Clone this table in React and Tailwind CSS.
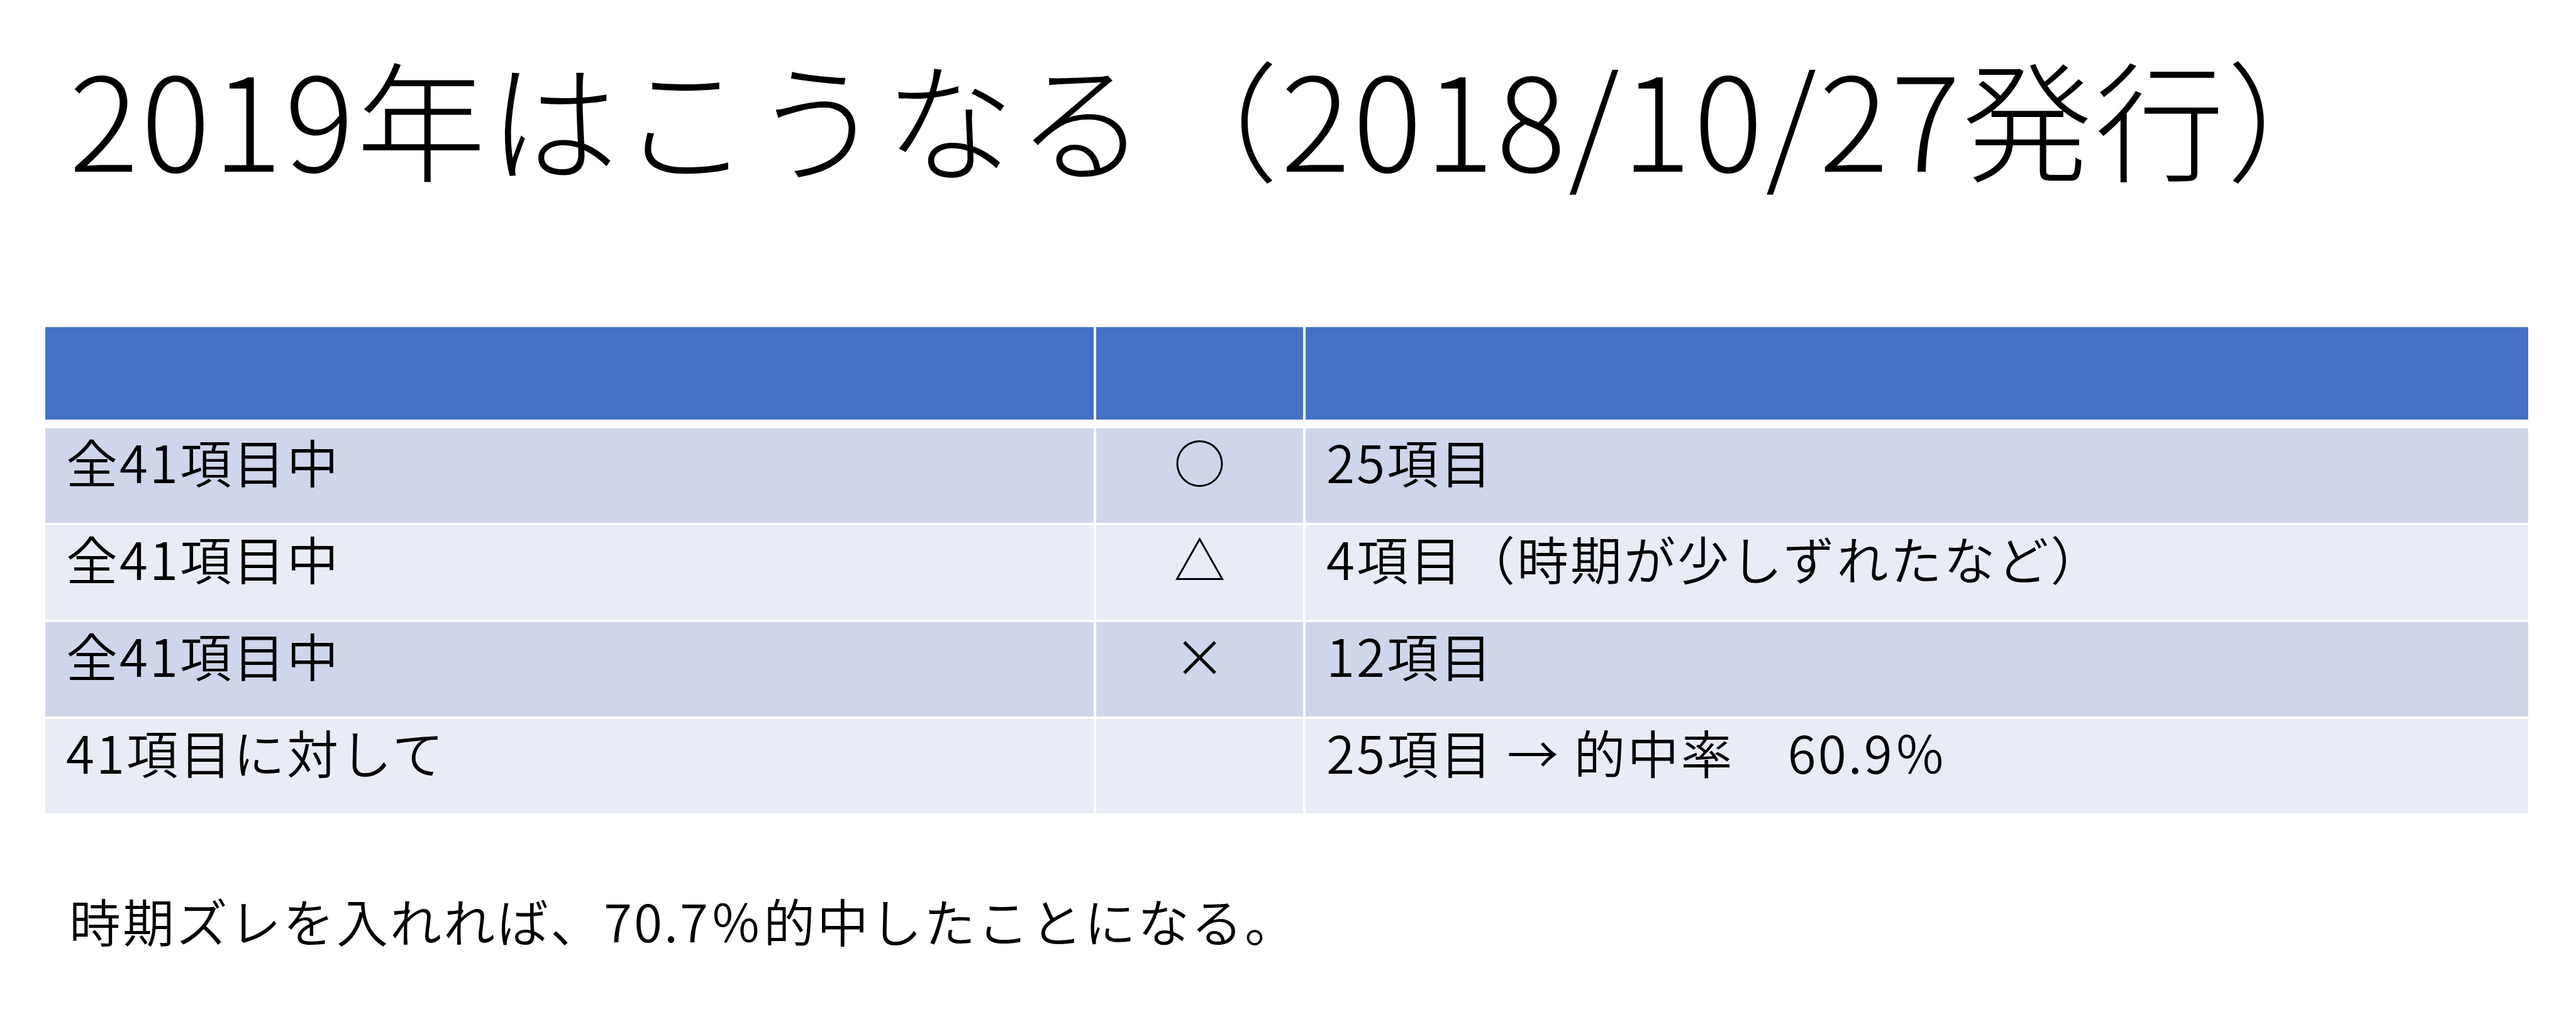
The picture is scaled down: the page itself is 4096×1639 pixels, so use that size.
import React from "react";

const rows = [
  { left: "全41項目中", mark: "○", right: "25項目", tone: "bg-[#cfd5ea]" },
  { left: "全41項目中", mark: "△", right: "4項目（時期が少しずれたなど）", tone: "bg-[#e9ebf5]" },
  { left: "全41項目中", mark: "×", right: "12項目", tone: "bg-[#cfd5ea]" },
  { left: "41項目に対して", mark: "", right: "25項目 → 的中率　60.9％", tone: "bg-[#e9ebf5]" },
];

const font = { fontFamily: '"Noto Sans CJK JP", "Noto Sans", sans-serif' };

export default function App() {
  return (
    <div className="w-[4096px] h-[1639px] bg-white text-black overflow-hidden flex flex-col" style={font}>
      <h1 className="pt-[80px] pl-[110px] text-[206px] leading-none font-light tracking-[4px] whitespace-nowrap">
        2019年はこうなる（2018/10/27発行）
      </h1>

      <div className="mt-[234px] ml-[72px] w-[3948px] flex flex-col text-[82px] leading-none font-[350] tracking-[3px]">
        <div className="h-[147px] flex gap-[4px] mb-[14px]">
          <div className="w-[1667px] bg-[#4472c4]" />
          <div className="w-[329px] bg-[#4472c4]" />
          <div className="flex-1 bg-[#4472c4]" />
        </div>
        <div className="flex flex-col gap-[4px]">
          {rows.map((r, i) => (
            <div key={i} className="h-[150px] flex gap-[4px]">
              <div className={`w-[1667px] pl-[33px] pt-[11px] whitespace-nowrap ${r.tone}`}>{r.left}</div>
              <div className={`w-[329px] pt-[11px] text-center tracking-normal ${r.tone}`}>{r.mark}</div>
              <div className={`flex-1 pl-[33px] pt-[11px] whitespace-nowrap ${r.tone}`}>{r.right}</div>
            </div>
          ))}
        </div>
      </div>

      <p className="mt-[129px] pl-[110px] text-[82px] leading-none font-[350] tracking-[3px] whitespace-nowrap">
        時期ズレを入れれば、70.7％的中したことになる。
      </p>
    </div>
  );
}
